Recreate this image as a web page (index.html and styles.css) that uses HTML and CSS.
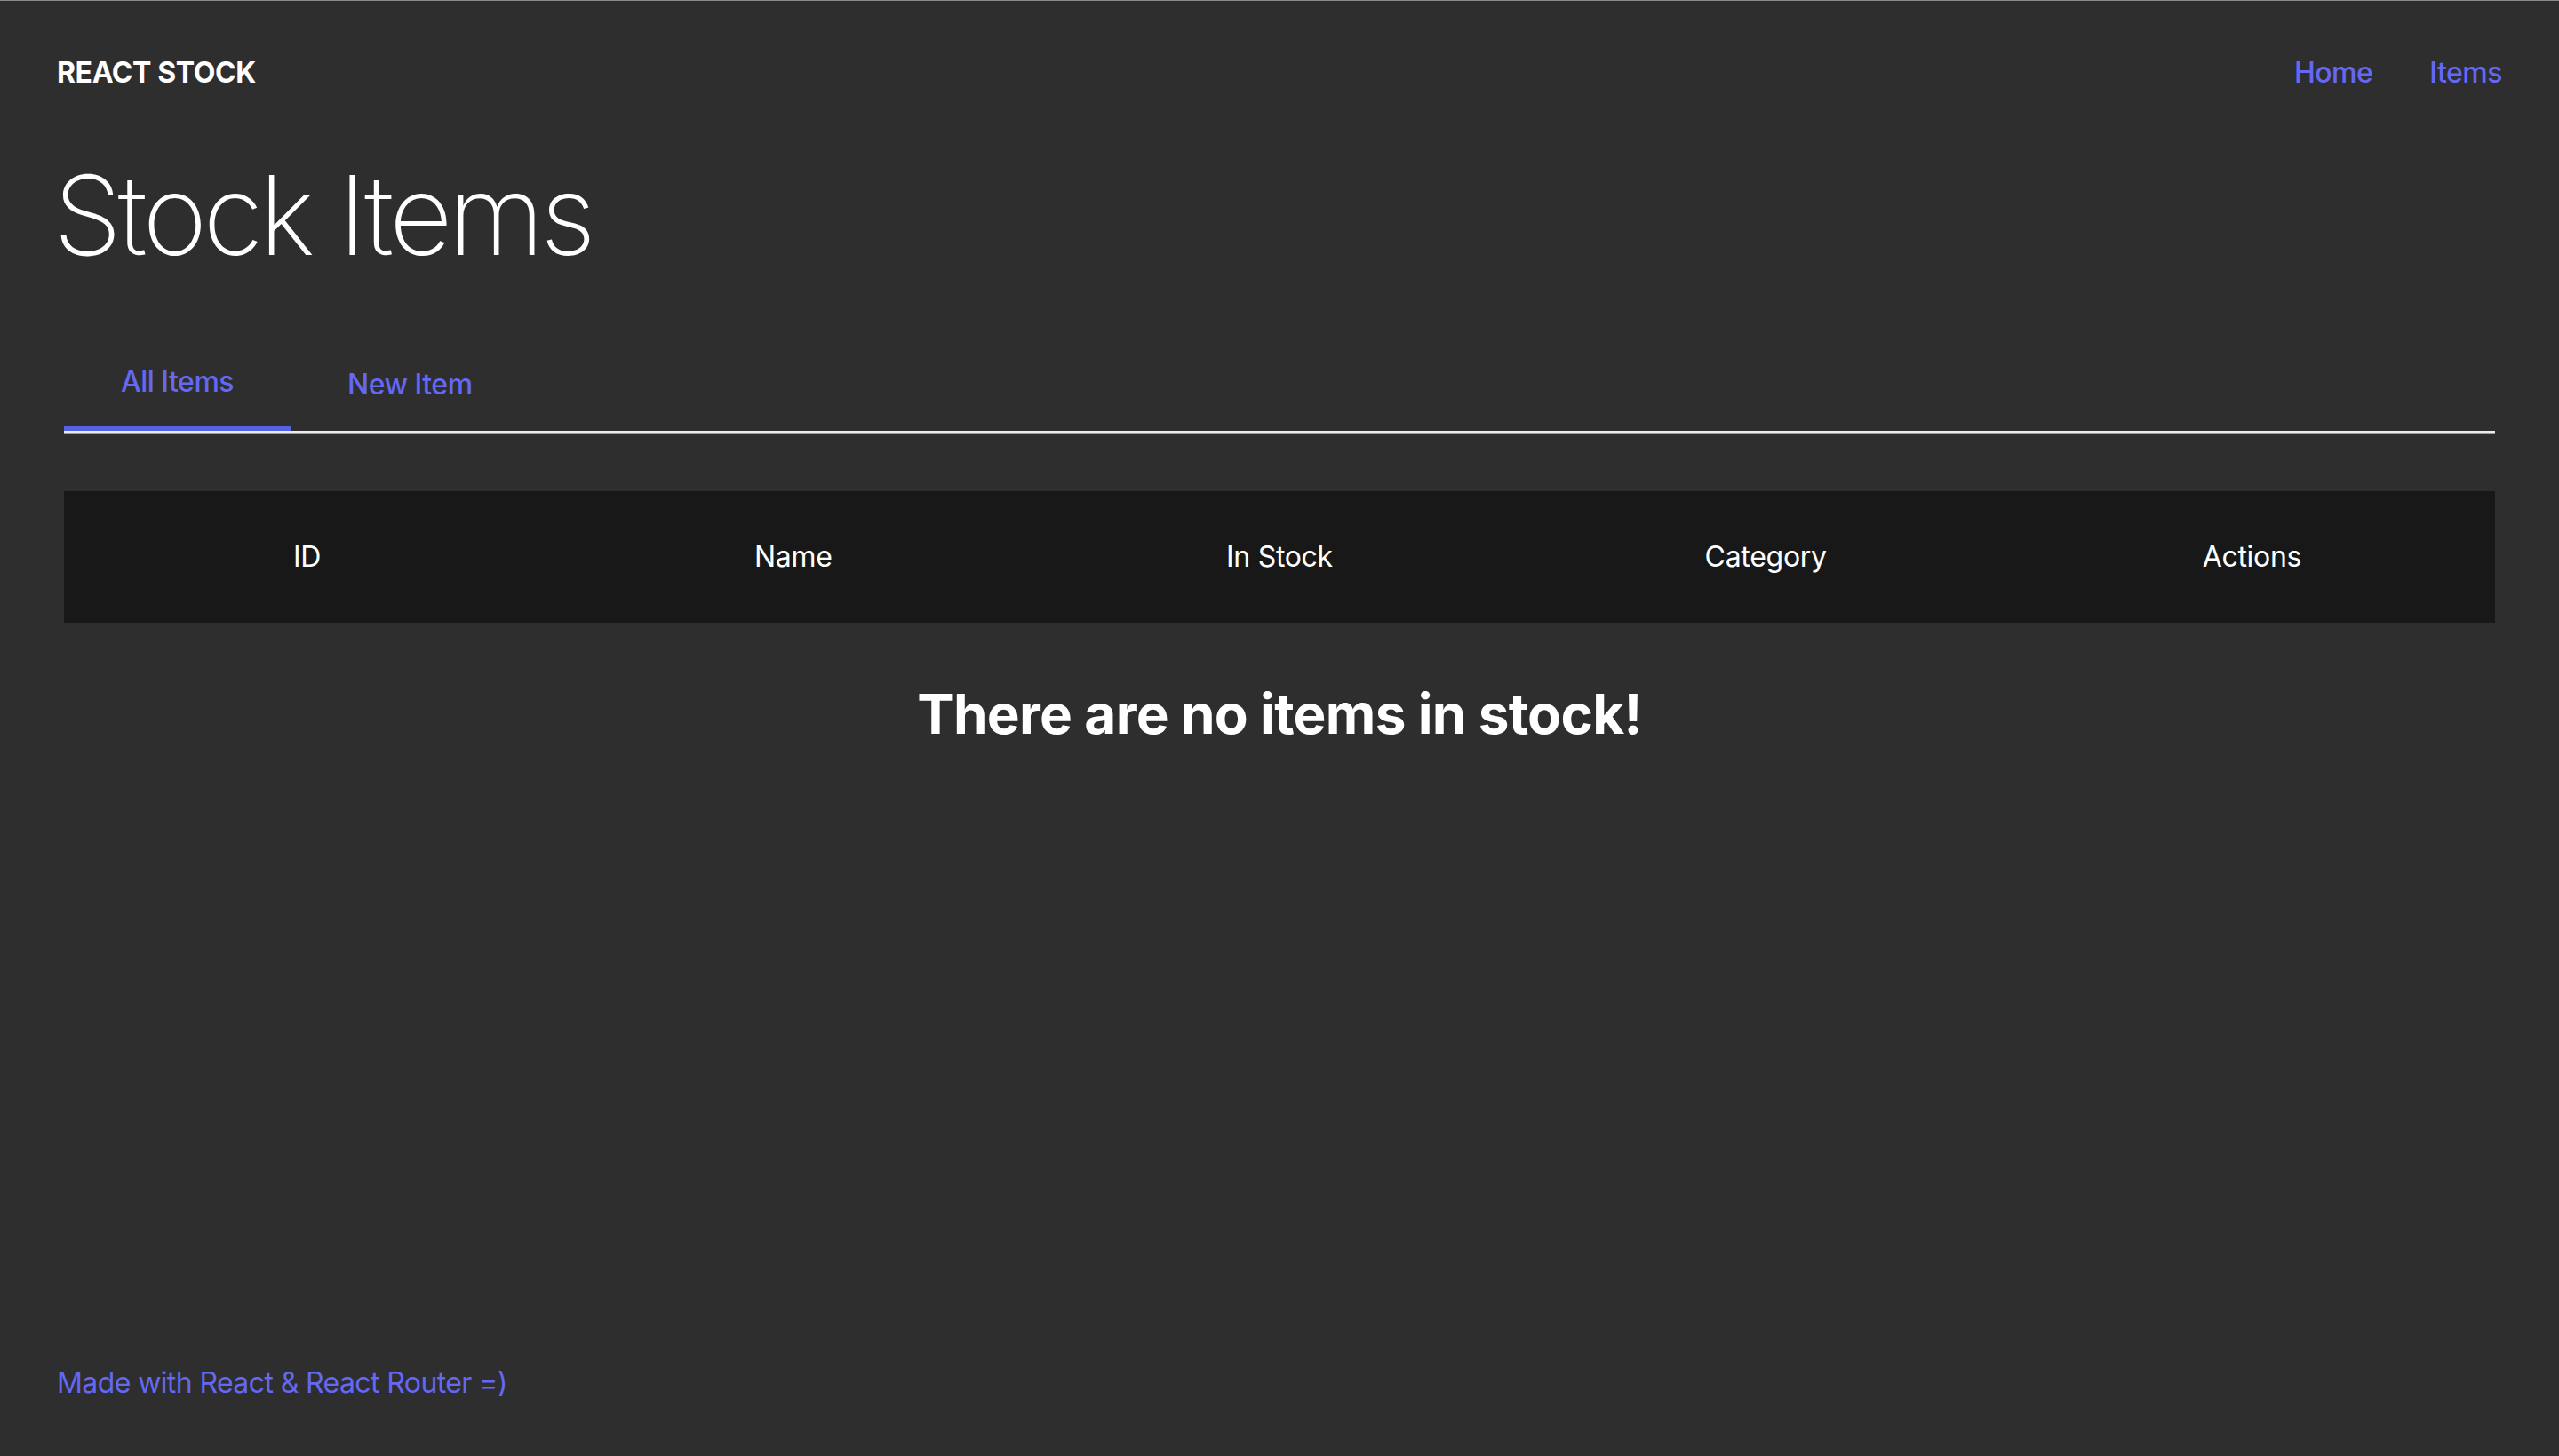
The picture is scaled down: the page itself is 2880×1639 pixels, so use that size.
FILE: index.html
```html
<!DOCTYPE html>
<html lang="en">
<head>
<meta charset="utf-8">
<title>React Stock</title>
<link rel="stylesheet" href="styles.css">
</head>
<body>
<div class="page">
  <header class="topbar">
    <div class="brand">REACT STOCK</div>
    <nav class="nav">
      <a href="#" class="nav-link">Home</a>
      <a href="#" class="nav-link">Items</a>
    </nav>
  </header>
  <main class="main">
    <h1 class="title">Stock Items</h1>
    <div class="content">
      <div class="tabs">
        <a href="#" class="tab tab-active">All Items</a>
        <a href="#" class="tab">New Item</a>
      </div>
      <table class="stock-table">
        <thead>
          <tr>
            <th>ID</th>
            <th>Name</th>
            <th>In Stock</th>
            <th>Category</th>
            <th>Actions</th>
          </tr>
        </thead>
      </table>
      <h2 class="empty">There are no items in stock!</h2>
    </div>
  </main>
  <footer class="footer">
    <a href="#" class="footer-link">Made with React &amp; React Router =)</a>
  </footer>
</div>
</body>
</html>
```
FILE: styles.css
```css
* { box-sizing: border-box; }
html, body {
  margin: 0;
  padding: 0;
  background: #2e2e2e;
}
body {
  font-family: Inter, "Noto Sans", "Liberation Sans", sans-serif;
  color: #ffffff;
  border-top: 1px solid #8a8a8a;
}
a { text-decoration: none; }
.page {
  min-height: calc(100vh - 1px);
  display: flex;
  flex-direction: column;
  padding: 61px 64px 62px;
}
.topbar {
  display: flex;
  justify-content: space-between;
  align-items: baseline;
  height: 40px;
}
.brand {
  font-size: 32px;
  line-height: 40px;
  font-weight: 700;
  letter-spacing: -0.4px;
}
.nav {
  display: flex;
  gap: 64px;
  align-items: baseline;
}
.nav-link {
  font-size: 32px;
  line-height: 40px;
  font-weight: 500;
  color: #6468f2;
  letter-spacing: -0.5px;
}
.main { flex: 1; }
.title {
  margin: 78px 0 0 -4px;
  font-size: 124px;
  line-height: 124px;
  font-weight: 200;
  letter-spacing: -4.6px;
}
.content {
  margin: 0 8px;
}
.tabs {
  display: flex;
  margin-top: 106px;
  border-bottom: 4px solid #ececec;
  position: relative;
}
.tabs::after {
  content: "";
  position: absolute;
  left: 0;
  right: 0;
  bottom: -4px;
  height: 2px;
  background: #9c9c9c;
}
.tab {
  font-size: 32px;
  line-height: 40px;
  font-weight: 500;
  color: #6468f2;
  padding: 0 64px 29px;
  border-bottom: 6px solid transparent;
  letter-spacing: -0.5px;
}
.tab + .tab {
  padding-top: 3px;
  padding-bottom: 26px;
}
.tab-active {
  border-bottom-color: #5561e8;
}
.stock-table {
  width: 100%;
  margin-top: 64px;
  border-collapse: collapse;
  table-layout: fixed;
  background: #181818;
}
.stock-table th {
  font-size: 32px;
  line-height: 40px;
  font-weight: 400;
  padding: 54px 0;
  text-align: center;
  color: #ffffff;
  letter-spacing: -0.3px;
}
.empty {
  margin: 66px 0 0;
  text-align: center;
  font-size: 62px;
  line-height: 74px;
  font-weight: 700;
  letter-spacing: -0.7px;
}
.footer {
  height: 40px;
}
.footer-link {
  font-size: 32px;
  line-height: 40px;
  color: #6468f2;
  letter-spacing: -0.6px;
}
```
